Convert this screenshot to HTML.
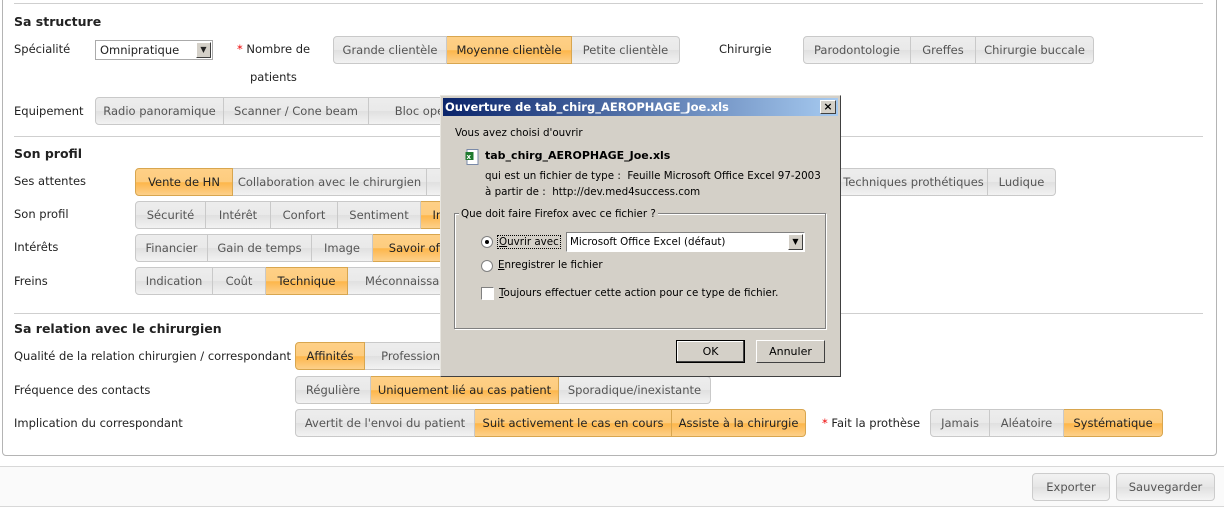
<!DOCTYPE html>
<html><head><meta charset="utf-8"><style>
*{margin:0;padding:0;box-sizing:border-box}
body{width:1224px;height:510px;background:#fff;font-family:"DejaVu Sans","Liberation Sans",sans-serif;font-size:11.5px;color:#222;position:relative;overflow:hidden}
.a{position:absolute;white-space:nowrap}
.panel{position:absolute;left:2px;top:-10px;width:1215px;height:466px;border:1px solid #b4b4b4;border-radius:4px}
.hr{position:absolute;left:14px;height:1px;background:#cfcfcf}
h3{position:absolute;font-size:12.5px;font-weight:bold;color:#222;left:14px}
.lbl{position:absolute;left:14px;font-size:11.5px;color:#222}
.g{position:absolute;display:flex;height:28px}
.g span{display:block;height:28px;line-height:26px;text-align:center;border:1px solid #c9c9c9;border-left:none;font-size:11.5px;color:#555;background:linear-gradient(#ededed 0%,#e9e9e9 50%,#e0e0e0 51%,#f2f2f2 100%);white-space:nowrap;overflow:hidden}
.g span:first-child{border-left:1px solid #c9c9c9;border-radius:4px 0 0 4px}
.g span:last-child{border-radius:0 4px 4px 0}
.g span.o{background:linear-gradient(#fed087 0%,#fdcc7e 50%,#fdb64a 52%,#fdd08a 100%);color:#222;border-color:#d8a64f}
.star{color:#e00}
.dlg{position:absolute;left:440px;top:95px;width:401px;height:282px;background:#d4d0c8;border:1px solid;border-color:#e8e6e0 #404040 #404040 #e8e6e0;font-family:"DejaVu Sans",sans-serif;font-size:10.3px;color:#000}
.dlg .t{position:absolute;left:2px;top:2px;right:2px;height:18px;background:linear-gradient(90deg,#0a246a,#a6caf0);color:#fff;font-weight:bold;font-size:11.5px;line-height:18px;padding-left:2px}
.xb{position:absolute;right:2px;top:2px;width:16px;height:14px;background:#d4d0c8;border:1px solid;border-color:#fff #404040 #404040 #fff;color:#000;font-size:11px;line-height:11px;text-align:center;font-weight:bold}
.btn{position:absolute;width:69px;height:23px;border:1px solid;border-color:#fff #404040 #404040 #fff;background:#d4d0c8;text-align:center;line-height:21px;font-size:11px}
.fbtn{position:absolute;height:28px;line-height:26px;border:1px solid #ccc;border-radius:4px;text-align:center;color:#555;font-size:11.5px;background:linear-gradient(#f2f2f2,#e6e6e6 50%,#e0e0e0 51%,#f4f4f4)}
</style></head><body>
<div class="panel"></div>
<div class="hr" style="top:3px;width:1189px"></div>
<h3 style="top:14px">Sa structure</h3>
<div class="lbl" style="top:42px">Spécialité</div>
<div class="a" style="left:95px;top:40px;width:118px;height:20px;border:1px solid #aaa;background:#fff;font-size:11.5px;line-height:18px;padding-left:4px">Omnipratique<span style="position:absolute;right:1px;top:1px;width:15px;height:16px;background:#d4d0c8;border:1px solid;border-color:#fff #404040 #404040 #fff;font-size:8px;line-height:14px;text-align:center">▼</span></div>
<div class="a" style="left:237px;top:42px"><span class="star">*</span> Nombre de</div>
<div class="a" style="left:250px;top:70px">patients</div>
<div class="g" style="left:333px;top:36px"><span style="width:114px">Grande clientèle</span><span class="o" style="width:125px">Moyenne clientèle</span><span style="width:108px">Petite clientèle</span></div>
<div class="a" style="left:719px;top:42px">Chirurgie</div>
<div class="g" style="left:803px;top:36px"><span style="width:108px">Parodontologie</span><span style="width:65px">Greffes</span><span style="width:118px">Chirurgie buccale</span></div>
<div class="lbl" style="top:104px">Equipement</div>
<div class="g" style="left:95px;top:97px"><span style="width:129px">Radio panoramique</span><span style="width:145px">Scanner / Cone beam</span><span style="width:140px">Bloc opératoire</span><span style="width:200px">x</span><span class="o" style="width:89px">x</span><span style="width:41px">3+</span></div>
<div class="hr" style="top:136px;width:1189px"></div>
<h3 style="top:146px">Son profil</h3>
<div class="lbl" style="top:174px">Ses attentes</div>
<div class="g" style="left:135px;top:168px"><span class="o" style="width:98px">Vente de HN</span><span style="width:194px">Collaboration avec le chirurgien</span><span style="width:413px">x</span><span style="width:148px">Techniques prothétiques</span><span style="width:68px">Ludique</span></div>
<div class="lbl" style="top:207px">Son profil</div>
<div class="g" style="left:135px;top:201px"><span style="width:71px">Sécurité</span><span style="width:65px">Intérêt</span><span style="width:67px">Confort</span><span style="width:83px">Sentiment</span><span class="o" style="width:60px">Image</span></div>
<div class="lbl" style="top:240px">Intérêts</div>
<div class="g" style="left:135px;top:234px"><span style="width:73px">Financier</span><span style="width:104px">Gain de temps</span><span style="width:61px">Image</span><span class="o" style="width:100px">Savoir offrir</span></div>
<div class="lbl" style="top:274px">Freins</div>
<div class="g" style="left:135px;top:267px"><span style="width:78px">Indication</span><span style="width:53px">Coût</span><span class="o" style="width:82px">Technique</span><span style="width:130px">Méconnaissance</span></div>
<div class="hr" style="top:313px;width:1189px"></div>
<h3 style="top:321px">Sa relation avec le chirurgien</h3>
<div class="lbl" style="top:349px">Qualité de la relation chirurgien / correspondant</div>
<div class="g" style="left:295px;top:342px"><span class="o" style="width:70px">Affinités</span><span style="width:120px">Professionnelle</span></div>
<div class="lbl" style="top:383px">Fréquence des contacts</div>
<div class="g" style="left:295px;top:376px"><span style="width:76px">Régulière</span><span class="o" style="width:188px">Uniquement lié au cas patient</span><span style="width:152px">Sporadique/inexistante</span></div>
<div class="lbl" style="top:416px">Implication du correspondant</div>
<div class="g" style="left:295px;top:409px"><span style="width:180px">Avertit de l'envoi du patient</span><span class="o" style="width:197px">Suit activement le cas en cours</span><span class="o" style="width:134px">Assiste à la chirurgie</span></div>
<div class="a" style="left:822px;top:416px"><span class="star">*</span> Fait la prothèse</div>
<div class="g" style="left:930px;top:409px"><span style="width:60px">Jamais</span><span style="width:74px">Aléatoire</span><span class="o" style="width:99px">Systématique</span></div>
<div class="a" style="left:0;top:466px;width:1224px;height:41px;background:#fafafa;border-top:1px solid #d8d8d8;border-bottom:1px solid #d8d8d8"></div>
<div class="fbtn" style="left:1032px;top:473px;width:78px">Exporter</div>
<div class="fbtn" style="left:1116px;top:473px;width:99px">Sauvegarder</div>

<div class="dlg">
<div class="t">Ouverture de tab_chirg_AEROPHAGE_Joe.xls<div class="xb">×</div></div>
<div class="a" style="left:14px;top:31px">Vous avez choisi d'ouvrir</div>
<svg class="a" style="left:24px;top:53px" width="14" height="16"><rect x="2" y="0.5" width="11" height="15" fill="#fff" stroke="#7a8aa8"/><rect x="0.5" y="3" width="8" height="8" fill="#1f7a2e"/><text x="1.5" y="10" font-size="7" fill="#fff" font-family="DejaVu Sans" font-weight="bold">x</text></svg>
<div class="a" style="left:44px;top:53px;font-weight:bold;font-size:11px">tab_chirg_AEROPHAGE_Joe.xls</div>
<div class="a" style="left:44px;top:74px">qui est un fichier de type :&nbsp; Feuille Microsoft Office Excel 97-2003</div>
<div class="a" style="left:44px;top:90px">à partir de :&nbsp; http://dev.med4success.com</div>
<div class="a" style="left:13px;top:117px;width:372px;height:116px;border:1px solid #808080;box-shadow:1px 1px 0 #fff, inset 1px 1px 0 #fff"></div>
<div class="a" style="left:18px;top:112px;background:#d4d0c8;padding:0 2px">Que doit faire Firefox avec ce fichier ?</div>
<div class="a" style="left:40px;top:140px;width:12px;height:12px;border-radius:50%;background:#fff;border:1px solid #808080"><div style="position:absolute;left:3px;top:3px;width:4px;height:4px;border-radius:50%;background:#000"></div></div>
<div class="a" style="left:56px;top:139px;border:1px dotted #000;padding:0 1px"><u>O</u>uvrir avec</div>
<div class="a" style="left:125px;top:136px;width:239px;height:20px;background:#fff;border:1px solid;border-color:#808080 #fff #fff #808080;line-height:18px;padding-left:3px">Microsoft Office Excel (défaut)<span style="position:absolute;right:1px;top:1px;width:15px;height:16px;background:#d4d0c8;border:1px solid;border-color:#fff #404040 #404040 #fff;font-size:8px;line-height:14px;text-align:center">▼</span></div>
<div class="a" style="left:40px;top:164px;width:12px;height:12px;border-radius:50%;background:#fff;border:1px solid #808080"></div>
<div class="a" style="left:57px;top:163px"><u>E</u>nregistrer le fichier</div>
<div class="a" style="left:40px;top:191px;width:13px;height:13px;background:#fff;border:1px solid;border-color:#808080 #fff #fff #808080"></div>
<div class="a" style="left:58px;top:191px"><u>T</u>oujours effectuer cette action pour ce type de fichier.</div>
<div class="btn" style="left:235px;top:244px;border:1px solid #000;box-shadow:inset -1px -1px 0 #404040, inset 1px 1px 0 #fff">OK</div>
<div class="btn" style="left:315px;top:244px">Annuler</div>
</div>
</body></html>
